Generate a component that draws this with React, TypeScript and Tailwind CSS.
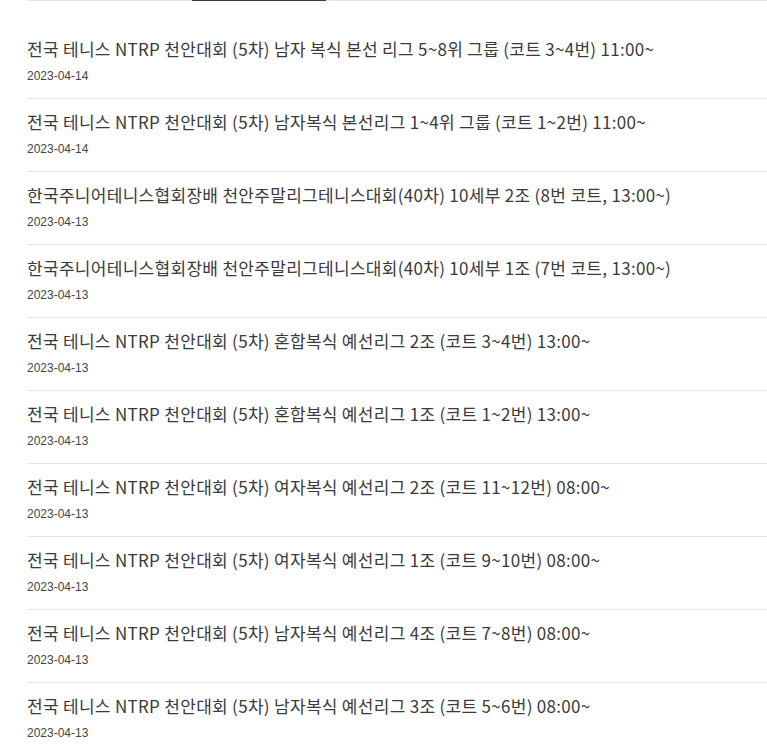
import React from 'react';

const posts = [
  { title: "전국 테니스 NTRP 천안대회 (5차) 남자 복식 본선 리그 5~8위 그룹 (코트 3~4번) 11:00~", date: "2023-04-14" },
  { title: "전국 테니스 NTRP 천안대회 (5차) 남자복식 본선리그 1~4위 그룹 (코트 1~2번) 11:00~", date: "2023-04-14" },
  { title: "한국주니어테니스협회장배 천안주말리그테니스대회(40차) 10세부 2조 (8번 코트, 13:00~)", date: "2023-04-13" },
  { title: "한국주니어테니스협회장배 천안주말리그테니스대회(40차) 10세부 1조 (7번 코트, 13:00~)", date: "2023-04-13" },
  { title: "전국 테니스 NTRP 천안대회 (5차) 혼합복식 예선리그 2조 (코트 3~4번) 13:00~", date: "2023-04-13" },
  { title: "전국 테니스 NTRP 천안대회 (5차) 혼합복식 예선리그 1조 (코트 1~2번) 13:00~", date: "2023-04-13" },
  { title: "전국 테니스 NTRP 천안대회 (5차) 여자복식 예선리그 2조 (코트 11~12번) 08:00~", date: "2023-04-13" },
  { title: "전국 테니스 NTRP 천안대회 (5차) 여자복식 예선리그 1조 (코트 9~10번) 08:00~", date: "2023-04-13" },
  { title: "전국 테니스 NTRP 천안대회 (5차) 남자복식 예선리그 4조 (코트 7~8번) 08:00~", date: "2023-04-13" },
  { title: "전국 테니스 NTRP 천안대회 (5차) 남자복식 예선리그 3조 (코트 5~6번) 08:00~", date: "2023-04-13" },
];

const App: React.FC = () => {
  return (
    <div className="bg-white h-[744px] overflow-hidden pl-[27px] font-['Noto_Sans_CJK_KR','Noto_Sans',sans-serif]">
      {/* 탭 하단 라인 */}
      <div className="h-px bg-[#e6e6e6] flex">
        <div className="ml-[165px] w-[134px] h-px bg-[#2f3a4d]"></div>
      </div>

      <ul className="pt-[25px]">
        {posts.map((p, i) => (
          <li key={i} className={`pt-[11px] pb-[13px] ${i > 0 ? 'border-t border-[#e6e6e6]' : ''}`}>
            <p className="text-[17px] leading-[24px] text-[#3a3a3a] tracking-[0.3px] whitespace-nowrap">{p.title}</p>
            <p className="mt-[6px] text-[12px] leading-[18px] text-[#444] font-['Liberation_Sans',sans-serif]">{p.date}</p>
          </li>
        ))}
      </ul>
    </div>
  );
};

export default App;
